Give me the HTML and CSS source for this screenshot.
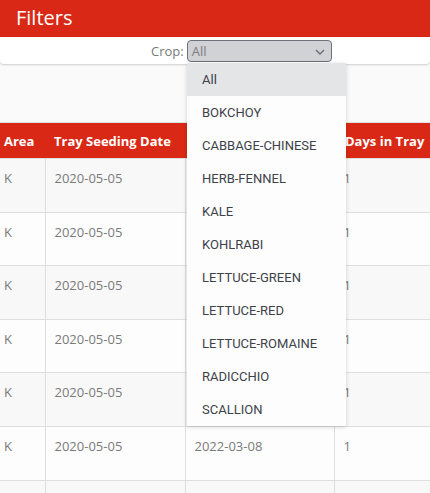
FILE: index.html
```html
<!DOCTYPE html>
<html>
<head>
<meta charset="utf-8">
<link rel="stylesheet" href="styles.css">
</head>
<body>
<header class="bar">Filters</header>
<div class="filter-panel">
  <span class="label">Crop:</span>
  <div class="select">
    <span>All</span>
    <svg class="chev" width="10" height="6" viewBox="0 0 10 6"><path d="M1 1 L5 5 L9 1" fill="none" stroke="#6a6d73" stroke-width="1.4"/></svg>
  </div>
</div>
<div class="table-wrap">
  <table class="grid">
    <thead>
      <tr><th class="c1">Area</th><th class="c2">Tray Seeding Date</th><th class="c3">Transplant Date</th><th class="c4">Days in Tray</th></tr>
    </thead>
    <tbody>
      <tr><td>K</td><td>2020-05-05</td><td>2022-03-08</td><td>1</td></tr>
      <tr><td>K</td><td>2020-05-05</td><td>2022-03-08</td><td>1</td></tr>
      <tr><td>K</td><td>2020-05-05</td><td>2022-03-08</td><td>1</td></tr>
      <tr><td>K</td><td>2020-05-05</td><td>2022-03-08</td><td>1</td></tr>
      <tr><td>K</td><td>2020-05-05</td><td>2022-03-08</td><td>1</td></tr>
      <tr><td>K</td><td>2020-05-05</td><td>2022-03-08</td><td>1</td></tr>
      <tr><td></td><td></td><td></td><td></td></tr>
    </tbody>
  </table>
</div>
<ul class="dropdown">
  <li class="active">All</li>
  <li>BOKCHOY</li>
  <li>CABBAGE-CHINESE</li>
  <li>HERB-FENNEL</li>
  <li>KALE</li>
  <li>KOHLRABI</li>
  <li>LETTUCE-GREEN</li>
  <li>LETTUCE-RED</li>
  <li>LETTUCE-ROMAINE</li>
  <li>RADICCHIO</li>
  <li>SCALLION</li>
</ul>
</body>
</html>
```
FILE: styles.css
```css
html, body {
  margin: 0;
  padding: 0;
  background: #fafafa;
  font-family: "Open Sans", sans-serif;
  overflow: hidden;
  height: 493px;
}
.bar {
  background: #d92916;
  color: #fff;
  font-size: 20px;
  height: 37px;
  line-height: 36px;
  padding-left: 16px;
}
.filter-panel {
  background: #fff;
  border-radius: 0 0 4px 4px;
  box-shadow: 0 1px 2px rgba(0,0,0,0.18);
  display: flex;
  align-items: flex-start;
  padding-top: 3px;
  padding-left: 151px;
  height: 24px;
}
.label {
  font-size: 13px;
  color: #7a7a7a;
  line-height: 22px;
  margin-right: 3px;
}
.select {
  border: 1px solid #6c7079;
  border-radius: 4px;
  background: #d1d2d6;
  display: flex;
  align-items: center;
  justify-content: space-between;
  padding: 0 6px 0 4px;
  box-sizing: border-box;
  width: 145px;
  height: 22px;
  font-size: 13px;
  color: #7d7d7d;
}
.chev { margin-top: 1px; }
.table-wrap {
  margin-top: 58px;
}
.grid {
  border-collapse: collapse;
  border-top: 1px solid #e2e2e2;
  table-layout: fixed;
  width: 470px;
}
.grid th {
  background: #d92916;
  color: #fff;
  font-weight: 700;
  font-size: 13px;
  text-align: left;
  height: 35px;
  padding: 0;
  white-space: nowrap;
}
.grid .c1 { width: 41px; padding-left: 4px; }
.grid .c2 { width: 131px; padding-left: 9px; }
.grid .c3 { width: 139px; padding-left: 10px; }
.grid .c4 { padding-left: 11px; }
.grid td {
  font-size: 13px;
  color: #7a7a7a;
  border: 1px solid #dedede;
  vertical-align: top;
  height: 53.6px;
  padding: 10px 0 0 9px;
  box-sizing: border-box;
}
.grid td:first-child { border-left: none; padding-left: 4px; }
.grid tbody tr:nth-child(odd) td { background: #f8f8f8; }
.grid tbody tr:nth-child(even) td { background: #fdfdfd; }
.dropdown {
  position: absolute;
  left: 187px;
  top: 63px;
  width: 159px;
  margin: 0;
  padding: 0;
  list-style: none;
  background: #fdfdfd;
  box-shadow: 0 1px 4px rgba(0,0,0,0.18);
}
.dropdown li {
  height: 33px;
  line-height: 33px;
  padding-left: 15px;
  font-family: Roboto, sans-serif;
  font-size: 13px;
  color: #3d424a;
}
.dropdown li.active { background: #e4e5e7; }
```
